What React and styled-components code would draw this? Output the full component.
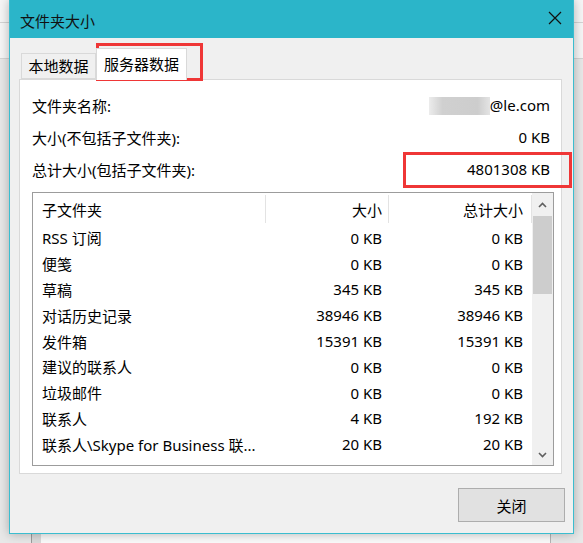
import React from "react";
import styled, { createGlobalStyle } from "styled-components";

const GlobalStyle = createGlobalStyle`
  html, body {
    margin: 0;
    padding: 0;
  }
  body {
    width: 583px;
    height: 543px;
    overflow: hidden;
    font-family: "Noto Sans", "Noto Sans CJK SC", sans-serif;
    color: #000;
    background:
      linear-gradient(#d4d4d4, #d4d4d4) 0 22px / 100% 1px no-repeat,
      linear-gradient(#d4d4d4, #d4d4d4) 0 58px / 100% 1px no-repeat,
      linear-gradient(#f6f6f6, #f6f6f6) 0 0 / 100% 58px no-repeat,
      linear-gradient(#9c9c9c, #9c9c9c) 31px 0 / 1px 100% no-repeat,
      linear-gradient(#dadada, #dadada) 32px 0 / 9px 100% no-repeat,
      linear-gradient(#fafafa, #fafafa) 41px 0 / 509px 100% no-repeat,
      linear-gradient(#b4b4b4, #b4b4b4) 550px 0 / 1px 100% no-repeat,
      #e8e8e8;
  }
`;

const Dialog = styled.div`
  position: relative;
  margin-left: 9px;
  width: 565px;
  height: 534px;
  box-sizing: border-box;
  border: 1px solid #3bbdcf;
  border-top: none;
  background: #f0f0f0;
  box-shadow: 0 0 10px rgba(0, 0, 0, 0.28);
  display: flex;
  flex-direction: column;
`;

const TitleBar = styled.div`
  height: 38px;
  flex: none;
  background: #2bb5c9;
  display: flex;
  align-items: center;
  justify-content: space-between;
  padding: 2px 11px 0 10px;
  box-sizing: border-box;
  font-size: 15px;
  color: #111;
`;

const CloseIcon = styled.svg`
  width: 14px;
  height: 14px;
  margin-top: -4px;
`;

const Body = styled.div`
  flex: 1;
  padding: 10px 11px 0 9px;
  display: flex;
  flex-direction: column;
`;

const TabStrip = styled.div`
  height: 31px;
  display: flex;
  align-items: flex-end;
  padding-left: 2px;
`;

const Tab = styled.div`
  box-sizing: border-box;
  height: ${(p) => (p.$active ? "32px" : "26px")};
  width: ${(p) => (p.$active ? "91px" : "75px")};
  margin-bottom: ${(p) => (p.$active ? "-1px" : "0")};
  background: ${(p) => (p.$active ? "#fff" : "#f0f0f0")};
  border: 1px solid #d9d9d9;
  border-bottom: ${(p) => (p.$active ? "none" : "1px solid #d9d9d9")};
  position: relative;
  z-index: ${(p) => (p.$active ? 1 : 0)};
  display: flex;
  align-items: center;
  justify-content: center;
  padding-bottom: ${(p) => (p.$active ? "3px" : "1px")};
  font-size: 15px;
`;

const Panel = styled.div`
  box-sizing: border-box;
  height: 395px;
  background: #fff;
  border: 1px solid #d9d9d9;
  padding: 9px 7px 0 12px;
  display: flex;
  flex-direction: column;
`;

const InfoRow = styled.div`
  height: 32px;
  display: flex;
  align-items: center;
  justify-content: space-between;
  padding-right: 4px;
  font-size: 15px;
`;

const Masked = styled.span`
  display: inline-block;
  width: 61px;
  height: 18px;
  vertical-align: middle;
  background: linear-gradient(90deg, #ececec, #d0d0d0 22%, #cdcdcd 80%, #e4e4e4);
  filter: blur(0.6px);
`;

const ListBox = styled.div`
  box-sizing: border-box;
  margin-top: 7px;
  height: 274px;
  border: 1px solid #9c9c9c;
  display: flex;
  overflow: hidden;
`;

const Table = styled.div`
  flex: 1;
  display: flex;
  flex-direction: column;
`;

const HeaderRow = styled.div`
  height: 32px;
  display: grid;
  grid-template-columns: 233px 123px 1fr;
  align-items: center;
`;

const HeaderCell = styled.div`
  height: 28px;
  box-sizing: border-box;
  border-right: 1px solid #e3e3e3;
  display: flex;
  align-items: center;
  justify-content: ${(p) => (p.$right ? "flex-end" : "flex-start")};
  padding: ${(p) => p.$pad};
  font-size: 15px;
`;

const Row = styled.div`
  height: 25.8px;
  display: grid;
  grid-template-columns: 233px 123px 1fr;
  align-items: center;
  font-size: 15px;
`;

const Cell = styled.div`
  padding: ${(p) => p.$pad};
  text-align: ${(p) => (p.$right ? "right" : "left")};
  white-space: nowrap;
  overflow: hidden;
  text-overflow: ellipsis;
`;

const ScrollBar = styled.div`
  width: 21px;
  flex: none;
  background: #f0f0f0;
  display: flex;
  flex-direction: column;
`;

const ArrowButton = styled.div`
  height: ${(p) => p.$h}px;
  display: flex;
  align-items: center;
  justify-content: center;
`;

const Thumb = styled.div`
  height: 78px;
  margin: 0 1px;
  background: #cdcdcd;
`;

const Track = styled.div`
  flex: 1;
`;

const Footer = styled.div`
  display: flex;
  justify-content: flex-end;
  margin-top: 14px;
  margin-right: -3px;
`;

const Button = styled.button`
  width: 107px;
  height: 34px;
  box-sizing: border-box;
  background: #e1e1e1;
  border: 1px solid #adadad;
  font-family: inherit;
  font-size: 15px;
  color: #000;
  padding: 0;
`;

const Mark = styled.div`
  position: absolute;
  box-sizing: border-box;
  border: 3px solid #ef3636;
  left: ${(p) => p.$x}px;
  top: ${(p) => p.$y}px;
  width: ${(p) => p.$w}px;
  height: ${(p) => p.$h}px;
  pointer-events: none;
`;

const folders = [
  ["RSS 订阅", "0 KB", "0 KB"],
  ["便笺", "0 KB", "0 KB"],
  ["草稿", "345 KB", "345 KB"],
  ["对话历史记录", "38946 KB", "38946 KB"],
  ["发件箱", "15391 KB", "15391 KB"],
  ["建议的联系人", "0 KB", "0 KB"],
  ["垃圾邮件", "0 KB", "0 KB"],
  ["联系人", "4 KB", "192 KB"],
  ["联系人\\Skype for Business 联...", "20 KB", "20 KB"],
];

function Chevron({ up }) {
  return (
    <svg width="9" height="6" viewBox="0 0 9 6">
      <polyline
        points={up ? "1,5 4.5,1.5 8,5" : "1,1 4.5,4.5 8,1"}
        fill="none"
        stroke="#5f5f5f"
        strokeWidth="1.6"
      />
    </svg>
  );
}

export default function App() {
  return (
    <>
      <GlobalStyle />
      <Dialog>
        <TitleBar>
          <span>文件夹大小</span>
          <CloseIcon viewBox="0 0 14 14">
            <path d="M1 1 L13 13 M13 1 L1 13" stroke="#111" strokeWidth="1.2" />
          </CloseIcon>
        </TitleBar>
        <Body>
          <TabStrip>
            <Tab>本地数据</Tab>
            <Tab $active>服务器数据</Tab>
          </TabStrip>
          <Panel>
            <InfoRow>
              <span>文件夹名称:</span>
              <span>
                <Masked />@le.com
              </span>
            </InfoRow>
            <InfoRow>
              <span>大小(不包括子文件夹):</span>
              <span>0 KB</span>
            </InfoRow>
            <InfoRow>
              <span>总计大小(包括子文件夹):</span>
              <span>4801308 KB</span>
            </InfoRow>
            <ListBox>
              <Table>
                <HeaderRow>
                  <HeaderCell $pad="0 0 0 9px">子文件夹</HeaderCell>
                  <HeaderCell $right $pad="0 6px 0 0">大小</HeaderCell>
                  <HeaderCell $right $pad="0 8px 0 0">总计大小</HeaderCell>
                </HeaderRow>
                {folders.map(([name, size, total]) => (
                  <Row key={name}>
                    <Cell $pad="0 0 0 9px">{name}</Cell>
                    <Cell $right $pad="0 7px 0 0">{size}</Cell>
                    <Cell $right $pad="0 9px 0 0">{total}</Cell>
                  </Row>
                ))}
              </Table>
              <ScrollBar>
                <ArrowButton $h={23}>
                  <Chevron up />
                </ArrowButton>
                <Thumb />
                <Track />
                <ArrowButton $h={21}>
                  <Chevron />
                </ArrowButton>
              </ScrollBar>
            </ListBox>
          </Panel>
          <Footer>
            <Button>关闭</Button>
          </Footer>
        </Body>
        <Mark $x={86} $y={43} $w={107} $h={38} />
        <Mark $x={393} $y={152} $w={169} $h={36} />
      </Dialog>
    </>
  );
}
